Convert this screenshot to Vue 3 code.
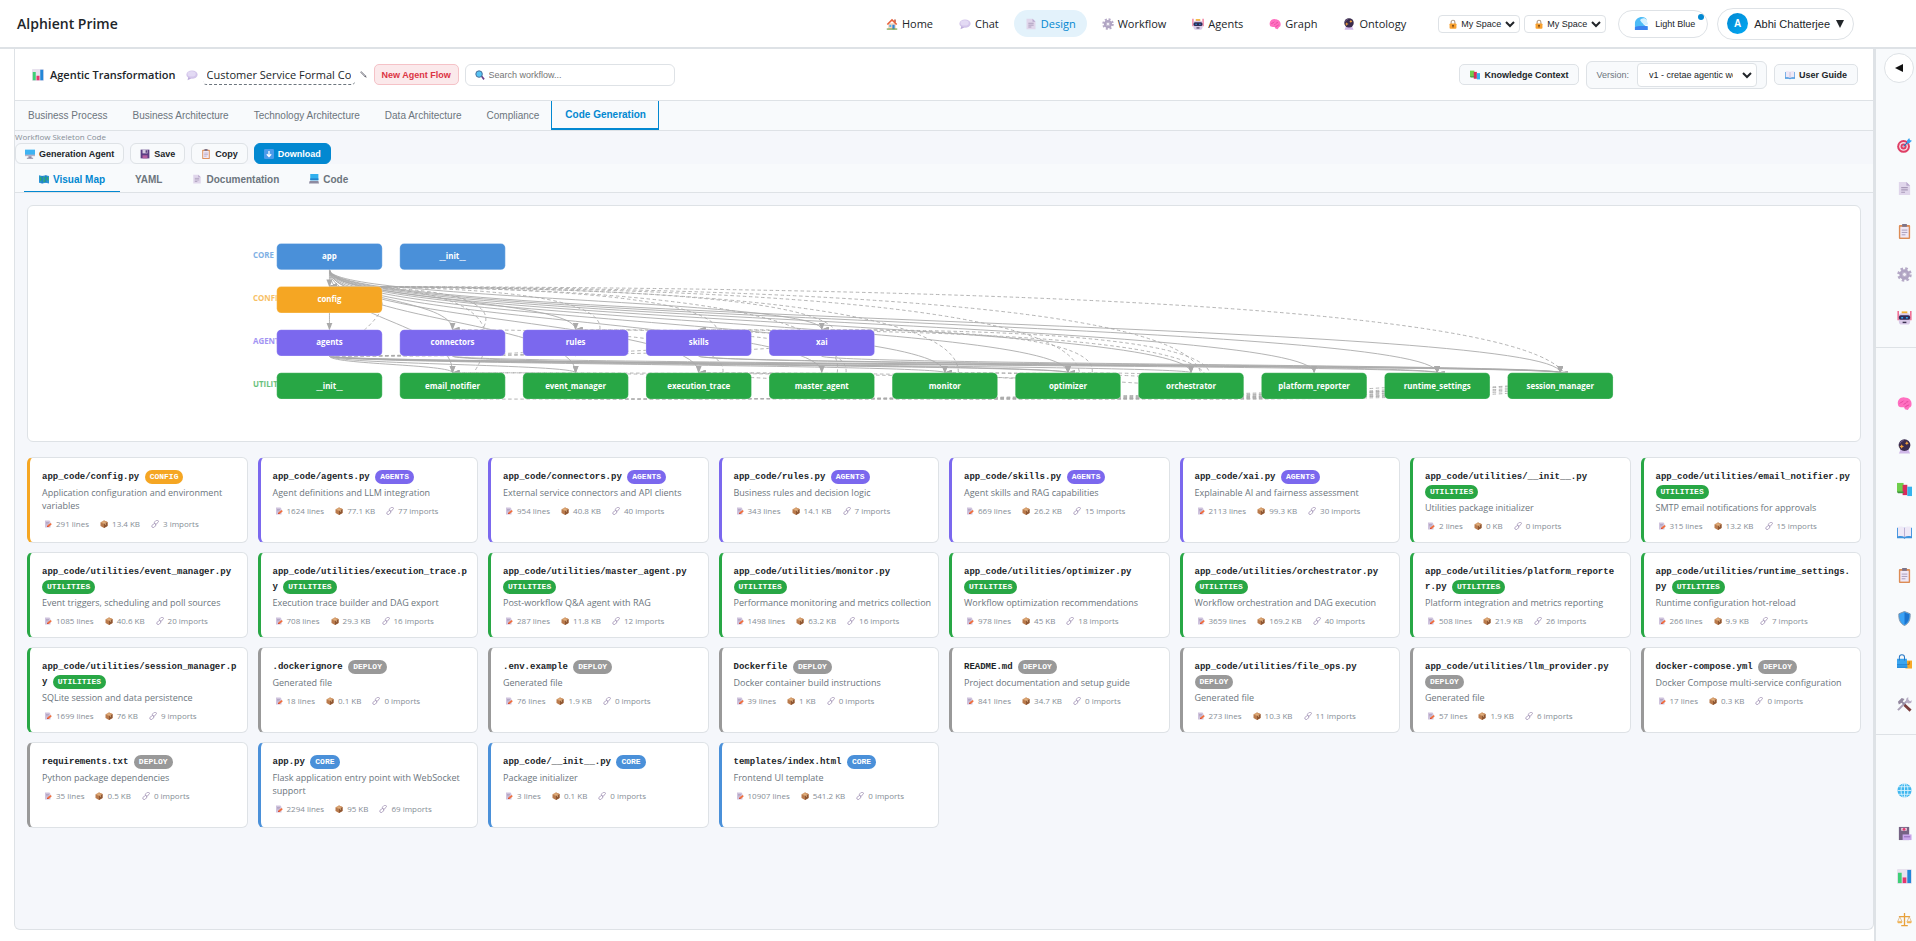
<template>
  <div class="app">
    <!-- shared icon shapes -->
    <svg class="sprite" aria-hidden="true">
      <symbol id="i-home" viewBox="0 0 16 16">
        <path d="M3 7h10v8H3z" fill="#f3d3bd" /><path d="M11 2h2v4h-2z" fill="#b5533c" />
        <path d="M1 8 8 1l7 7-1.500 1.200L8 4 2.500 9.200z" fill="#e8613c" />
        <path d="M8.500 9h3v6h-3z" fill="#2f86d6" /><path d="M4.500 9h2.500v3H4.500z" fill="#4fb4ef" /><path d="M1 14h14v1.500H1z" fill="#6b9e3f" />
      </symbol>
      <symbol id="i-chat" viewBox="0 0 16 16">
        <ellipse cx="8" cy="7.500" rx="7.500" ry="5.500" fill="#d3c5ea" /><path d="m3 11-1 4 5-2.500z" fill="#bfaedd" />
        <ellipse cx="7.500" cy="6.500" rx="5.500" ry="3.500" fill="#e3daf4" />
      </symbol>
      <symbol id="i-page" viewBox="0 0 16 16">
        <path d="M2 1h8l4 4v10H2z" fill="#e0d6eb" /><path d="m10 1 4 4h-4z" fill="#b9a9cd" />
        <path d="M4.500 7h7M4.500 9.500h7M4.500 12h4" stroke="#a899b8" stroke-width="1.200" />
      </symbol>
      <symbol id="i-gear" viewBox="0 0 16 16">
        <circle cx="8" cy="8" r="6.200" fill="none" stroke="#b5a9c6" stroke-width="3" stroke-dasharray="2.600 2.270" />
        <circle cx="8" cy="8" r="4" fill="none" stroke="#b0a4c3" stroke-width="3" /><circle cx="8" cy="8" r="2.200" fill="#f3eff8" stroke="#8f82a5" stroke-width=".6" />
      </symbol>
      <symbol id="i-robot" viewBox="0 0 16 16">
        <path d="M.5 1h1.500v10H.5zM14 1h1.500v10H14z" fill="#ef5c86" /><path d="M5 1.500h6V4H5z" fill="#f2b233" />
        <rect x="2" y="3.500" width="12" height="12" rx="3" fill="#d9c9e8" /><rect x="2" y="5.500" width="12" height="5" rx="2" fill="#312a55" />
        <path d="M4.500 7.500h2v1.500h-2zM9.500 7.500h2v1.500h-2z" fill="#2aa9f5" /><path d="M6 12.500h4V14H6z" fill="#3c3251" />
      </symbol>
      <symbol id="i-brain" viewBox="0 0 16 16">
        <path d="M1 9C0 4 4 1 8 1.500 13 1.500 16 5 15.500 9c0 2-1 3-2 3l-2 3-3-1-1-2C4 12 1.500 12 1 9z" fill="#ff6fc0" />
        <path d="M3 8c1-2 3-1 4-3M7 9c2 0 2-3 5-3M9 12c0-2 3-1 4-3" stroke="#e0459b" fill="none" />
      </symbol>
      <symbol id="i-orb" viewBox="0 0 16 16">
        <path d="M4 11h8l2 4.500H2z" fill="#d0b8e8" /><circle cx="8" cy="6.500" r="6.300" fill="#3a2c4d" /><path d="M3 5a5 5 0 0 1 4-3.500" stroke="#75628c" fill="none" />
        <path d="m5 5.500.8 1.700 1.700.8-1.700.8L5 10.500l-.8-1.700L2.500 8l1.700-.8zM10.500 2.500l.7 1.300 1.300.7-1.300.7-.7 1.300-.7-1.300-1.300-.7 1.300-.7z" fill="#f5a23c" />
      </symbol>
      <symbol id="i-lock" viewBox="0 0 16 16">
        <path d="M5 8V5a3 3 0 0 1 6 0v3" fill="none" stroke="#b09a85" stroke-width="1.800" /><rect x="2.500" y="7" width="11" height="8.500" rx="1.500" fill="#f9a12f" />
        <circle cx="8" cy="10.500" r="1.300" fill="#5b3413" /><path d="M7.400 11h1.200v2.500H7.400z" fill="#5b3413" />
      </symbol>
      <symbol id="i-wave" viewBox="0 0 16 16">
        <path d="M1 15V8C1 3.500 4.500 1 8.500 1c3 0 5 1.500 5.500 3.500-2-1-4-.5-4.500 2 0 2.500 2 4.500 5 4.500V15z" fill="#4dbcf7" />
        <path d="M1 12c4-2 9-1 13.500-1V15H1z" fill="#3b82f0" /><path d="M6.500 4.500C8 2 12 1.500 14 4.500c-.5 2.500 1 2 1 4-1.500 2-4 1.500-5.500-.5-1.500-1-2-2.500-3-3.500z" fill="#d6f1ff" />
      </symbol>
      <symbol id="i-chart" viewBox="0 0 16 16">
        <rect width="16" height="16" rx="1" fill="#e8e2ee" /><path d="M1 4h4v11H1z" fill="#3ecf76" /><path d="M6 9h4v6H6z" fill="#e5366f" /><path d="M11 1h4v14h-4z" fill="#2387d8" />
      </symbol>
      <symbol id="i-pencil" viewBox="0 0 16 16">
        <path d="m1 3 2-2 10 10-2 2z" fill="#b9b9bf" stroke="#9a9aa2" stroke-width="2" /><path d="m10 13 3-3 2.500 5.500z" fill="#6a6a70" />
      </symbol>
      <symbol id="i-search" viewBox="0 0 16 16">
        <path d="m9 10 2-1.500 4.500 5.500-2 1.800z" fill="#6a3c86" /><circle cx="6.500" cy="6.500" r="5.200" fill="#57c3f3" stroke="#4a6f98" stroke-width="1.600" />
      </symbol>
      <symbol id="i-books" viewBox="0 0 16 16">
        <path d="M0 1h7v10H0z" fill="#6fce4b" /><path d="M6 3h5v11H6z" fill="#d92b5c" /><path d="M11 5h5v10h-5z" fill="#34b3ee" /><path d="M0 10h7v2H1z" fill="#3f9440" />
      </symbol>
      <symbol id="i-book" viewBox="0 0 16 16">
        <path d="M0 3h16v11H9l-1 1-1-1H0z" fill="#3f93dd" /><path d="M1 2c3-1 5-.5 7 1 2-1.500 4-2 7-1v10c-3-.5-5-.5-7 .8-2-1.300-4-1.300-7-.8z" fill="#efe9f7" /><path d="M8 3v10" stroke="#b7abd0" />
      </symbol>
      <symbol id="i-target" viewBox="0 0 16 16">
        <circle cx="7" cy="9" r="6.800" fill="#df3e64" /><circle cx="7" cy="9" r="4.700" fill="#f4dfe8" /><circle cx="7" cy="9" r="3.200" fill="#df3e64" /><circle cx="7" cy="9" r="1.200" fill="#f4dfe8" />
        <path d="m7 9 5-5" stroke="#2679bd" stroke-width="1.300" /><path d="m10.500 3 2.500-3 .8 2.200L16 3l-3 2.600-2 .2z" fill="#38a5f0" />
      </symbol>
      <symbol id="i-clip" viewBox="0 0 16 16">
        <rect x="2" y="1" width="12" height="15" rx="1" fill="#dd8c55" /><path d="M3.500 3h9v11.500h-9z" fill="#efe8f6" /><path d="M5.500 0h5v3h-5z" fill="#7d7489" />
        <path d="M5 6.500h6M5 9h6M5 11.500h4" stroke="#a899b8" />
      </symbol>
      <symbol id="i-shield" viewBox="0 0 16 16">
        <path d="M8 .5 14 3c.3 6-1 10-6 12.500C3 13 1.700 9 2 3z" fill="#3aa2f5" stroke="#7d91a8" stroke-width="1" /><path d="m8 1.500 5 2c.2 5-.8 8.500-5 11z" fill="#1b74cf" />
      </symbol>
      <symbol id="i-bags" viewBox="0 0 16 16">
        <path d="M9 7h7v8.500H9z" fill="#f7a928" /><path d="M13 8v3h-2" fill="none" stroke="#ad6510" /><path d="M0 5h10.500l.5 10H0z" fill="#3aa5ef" />
        <path d="M2.500 7V3.500a2.700 2.700 0 0 1 5.500 0V7" fill="none" stroke="#2877c4" stroke-width="1.100" /><path d="M0 11.500h11M0 14h11" stroke="#1f7fd0" />
      </symbol>
      <symbol id="i-tools" viewBox="0 0 16 16">
        <path d="M1 14 12 3" stroke="#aba1b8" stroke-width="2.200" /><path d="M10 1.500 12 0v3l2 1.500 2-1-1 3-3 .5-2.500-2z" fill="#b7adc4" />
        <path d="m1 5 4-4 3 1-3 4-3 2z" fill="#93889f" /><path d="m5 5 4 4" stroke="#93889f" stroke-width="2" /><path d="m8 8.500 6.500 6" stroke="#7a3d3d" stroke-width="3" />
      </symbol>
      <symbol id="i-globe" viewBox="0 0 16 16">
        <circle cx="8" cy="8" r="7.500" fill="#40b7ef" /><path d="M.5 8h15M2 4h12M2 12h12M8 .5v15" stroke="#dff5ff" stroke-width=".9" /><ellipse cx="8" cy="8" rx="3.700" ry="7.500" fill="none" stroke="#dff5ff" stroke-width=".9" />
      </symbol>
      <symbol id="i-printer" viewBox="0 0 16 16">
        <path d="M2 1h11v14H2z" fill="#756384" /><path d="M6 9h9.500v6H6z" fill="#c9a6ea" /><path d="M7.500 11.500h6.500" stroke="#8f68b8" /><path d="M4.500 2h6v3h-6z" fill="#f0d5e2" /><circle cx="7.500" cy="3.500" r="1.500" fill="#e23a72" />
      </symbol>
      <symbol id="i-scales" viewBox="0 0 16 16">
        <path d="M8 1v13M4.500 14.500h7M2 5h12" stroke="#e8a13a" stroke-width="1.400" /><path d="M3 5 .8 10h4.400zM13 5l-2.200 5h4.400z" fill="none" stroke="#dcae72" stroke-width=".8" /><path d="M0 10h6l-1 2H1zM10 10h6l-1 2h-4z" fill="#f1b350" />
      </symbol>
      <symbol id="i-memo" viewBox="0 0 16 16">
        <path d="M2 1h9l2 3v11H2z" fill="#cfc3dd" /><path d="M4 5h6M4 7.500h5" stroke="#9b8dae" /><path d="m6 14 1-3.500L13.500 6 15.500 8.500 9.500 14z" fill="#f0703f" /><path d="m6 14 .8-2.500L9 14z" fill="#c7383f" />
      </symbol>
      <symbol id="i-package" viewBox="0 0 16 16">
        <path d="m1 5 7-4 7 3v8l-7 4-7-4z" fill="#b97a4c" /><path d="m8 8 7-4v8l-7 4z" fill="#8f5733" /><path d="m1 5 7-4 7 3-7 4z" fill="#d59c6a" /><path d="m4 3 7 3.500V10" stroke="#efcf9e" fill="none" />
      </symbol>
      <symbol id="i-link" viewBox="0 0 16 16">
        <rect x="7" y="1.500" width="9" height="5.500" rx="2.700" transform="rotate(-45 11 5)" fill="none" stroke="#a596b8" stroke-width="1.700" />
        <rect x="1" y="8.500" width="9" height="5.500" rx="2.700" transform="rotate(-45 5.500 11)" fill="none" stroke="#a596b8" stroke-width="1.700" />
      </symbol>
      <symbol id="i-map" viewBox="0 0 16 16">
        <path d="m0 2 5 1 6-1 5 1v12l-5-1-6 1-5-1z" fill="#2a93d8" /><path d="m1 4 3 1 1 4-3 3zM7 4l3 1-1 4 2 3-4 1zM12 4l3 1v6l-3-2z" fill="#2fa874" /><path d="M5 3v12M11 2v12" stroke="#156aa8" />
      </symbol>
      <symbol id="i-pc" viewBox="0 0 16 16">
        <path d="M0 1h16v10H0z" fill="#3fb3f2" /><path d="M0 9h16v2.500H0z" fill="#b8b0c4" /><path d="M5.500 11.500h5V14h-5zM3 14h10v1.500H3z" fill="#8f87a0" />
      </symbol>
      <symbol id="i-laptop" viewBox="0 0 16 16">
        <path d="M2 0h13v10H2z" fill="#31b0ee" /><path d="M2 7h13v3H2z" fill="#2383cb" /><path d="M1 11h14l1 4H0z" fill="#8d8aa0" />
      </symbol>
      <symbol id="i-floppy" viewBox="0 0 16 16">
        <path d="M1 1h14v14H1z" fill="#5c3f84" /><path d="M4 1h8v6H4z" fill="#d6cce2" /><path d="M4 10h8v5H4z" fill="#b45fa0" /><path d="M9 2h2v4H9z" fill="#4b3170" />
      </symbol>
      <symbol id="i-down" viewBox="0 0 16 16">
        <rect width="16" height="16" rx="2" fill="#4b9bea" /><path d="M8 3v9M4.500 8.500 8 12l3.500-3.500" fill="none" stroke="#fff" stroke-width="2" />
      </symbol>
      <symbol id="i-chevron" viewBox="0 0 10 8">
        <path d="m1 2 4 4 4-4" fill="none" stroke="#212529" stroke-width="2" />
      </symbol>
    </svg>

    <header class="topbar">
      <h1 class="brand">Alphient Prime</h1>
      <nav class="main-nav">
        <a
          v-for="item in navItems"
          :key="item.label"
          href="#"
          class="nav-item"
          :class="{ active: item.label === 'Design' }"
        >
          <svg class="icon"><use :href="`#i-${item.icon}`" /></svg>
          {{ item.label }}
        </a>
      </nav>
      <div class="spaces">
        <label v-for="n in 2" :key="n" class="space-box">
          <svg class="icon small"><use href="#i-lock" /></svg>
          <select :aria-label="`Space ${n}`">
            <option>My Space</option>
          </select>
          <svg class="chevron"><use href="#i-chevron" /></svg>
        </label>
      </div>
      <button type="button" class="theme-btn">
        <svg class="icon wave"><use href="#i-wave" /></svg>
        Light Blue
        <span class="dot"></span>
      </button>
      <button type="button" class="user-btn">
        <span class="avatar">A</span>
        Abhi Chatterjee
        <svg class="caret" viewBox="0 0 8 8"><path d="M0 0h8L4 8z" fill="#212529" /></svg>
      </button>
    </header>

    <div class="body">
      <main class="workspace">
        <div class="title-row">
          <svg class="icon"><use href="#i-chart" /></svg>
          <h2 class="title">Agentic Transformation</h2>
          <svg class="icon"><use href="#i-chat" /></svg>
          <input v-model="workflowName" class="name-input" type="text" aria-label="Workflow name" />
          <svg class="icon pencil"><use href="#i-pencil" /></svg>
          <button type="button" class="new-btn">New Agent Flow</button>
          <label class="search">
            <svg class="icon small"><use href="#i-search" /></svg>
            <input type="search" placeholder="Search workflow..." aria-label="Search workflow" />
          </label>
          <div class="title-actions">
            <button type="button" class="soft-btn">
              <svg class="icon small"><use href="#i-books" /></svg>Knowledge Context
            </button>
            <div class="version">
              <label for="version">Version:</label>
              <span class="version-box">
                <select id="version">
                  <option>v1 - cretae agentic workflow</option>
                </select>
                <svg class="chevron"><use href="#i-chevron" /></svg>
              </span>
            </div>
            <button type="button" class="soft-btn">
              <svg class="icon small"><use href="#i-book" /></svg>User Guide
            </button>
          </div>
        </div>

        <div class="tabs" role="tablist">
          <button
            v-for="tab in tabs"
            :key="tab"
            type="button"
            role="tab"
            class="tab"
            :class="{ active: activeTab === tab }"
            :aria-selected="activeTab === tab"
            @click="activeTab = tab"
          >
            {{ tab }}
          </button>
        </div>

        <div class="toolbar">
          <p class="toolbar-label">Workflow Skeleton Code</p>
          <div class="toolbar-buttons">
            <button
              v-for="btn in toolbarButtons"
              :key="btn.label"
              type="button"
              class="tool-btn"
              :class="{ primary: btn.primary }"
            >
              <svg class="icon small"><use :href="`#i-${btn.icon}`" /></svg>{{ btn.label }}
            </button>
          </div>
        </div>

        <div class="sub-tabs" role="tablist">
          <button
            v-for="view in views"
            :key="view.label"
            type="button"
            role="tab"
            class="sub-tab"
            :class="{ active: activeView === view.label }"
            :aria-selected="activeView === view.label"
            @click="activeView = view.label"
          >
            <svg v-if="view.icon" class="icon small"><use :href="`#i-${view.icon}`" /></svg>{{ view.label }}
          </button>
        </div>

        <div class="content">
          <section class="map-panel">
            <svg class="map" viewBox="0 0 1600 240">
              <defs>
                <marker id="arrow" viewBox="0 0 10 10" refX="9" refY="5" markerWidth="9" markerHeight="7" markerUnits="userSpaceOnUse" preserveAspectRatio="none" orient="auto">
                  <path d="M0 0 10 5 0 10z" fill="#aaa" />
                </marker>
              </defs>
              <text
                v-for="(layer, row) in layers"
                :key="layer.name"
                x="14"
                :y="nodeTop(row) + 16"
                class="layer-label"
                :fill="colors[layer.name]"
              >{{ layer.name.toUpperCase() }}</text>
              <path
                v-for="(edge, i) in edges"
                :key="i"
                :d="edge.d"
                class="edge"
                :class="{ dashed: edge.dashed }"
                marker-end="url(#arrow)"
              />
              <template v-for="(layer, row) in layers" :key="layer.name">
                <g v-for="(node, col) in layer.nodes" :key="node">
                  <rect
                    :x="nodeCenter(col) - 60"
                    :y="nodeTop(row)"
                    width="120"
                    height="30"
                    rx="5"
                    :fill="colors[layer.name]"
                    stroke="#fff"
                    stroke-opacity=".3"
                  />
                  <text :x="nodeCenter(col)" :y="nodeTop(row) + 18" class="node-label">{{ node }}</text>
                </g>
              </template>
            </svg>
          </section>

          <section class="file-grid">
            <article
              v-for="file in files"
              :key="file.name"
              class="file-card"
              :style="{ borderLeftColor: colors[file.layer] }"
            >
              <h3 class="file-name">
                {{ file.name }}
                <span class="badge" :style="{ backgroundColor: colors[file.layer] }">{{ file.layer.toUpperCase() }}</span>
              </h3>
              <p class="file-desc">{{ file.desc }}</p>
              <div class="file-meta">
                <span><svg class="icon tiny"><use href="#i-memo" /></svg>{{ file.lines }} lines</span>
                <span><svg class="icon tiny"><use href="#i-package" /></svg>{{ file.size }} KB</span>
                <span><svg class="icon tiny"><use href="#i-link" /></svg>{{ file.imports }} imports</span>
              </div>
            </article>
          </section>
        </div>
      </main>

      <aside class="sidebar">
        <button type="button" class="collapse-btn" aria-label="Expand panel">
          <svg viewBox="0 0 8 8"><path d="M8 0v8L0 4z" fill="#111" /></svg>
        </button>
        <div v-for="(group, g) in sideGroups" :key="g" class="side-group">
          <button v-for="icon in group" :key="icon" type="button" class="side-btn" :aria-label="icon">
            <svg class="icon"><use :href="`#i-${icon}`" /></svg>
          </button>
        </div>
      </aside>
    </div>
  </div>
</template>

<script setup>
import { ref } from 'vue'

const navItems = [
  { icon: 'home', label: 'Home' },
  { icon: 'chat', label: 'Chat' },
  { icon: 'page', label: 'Design' },
  { icon: 'gear', label: 'Workflow' },
  { icon: 'robot', label: 'Agents' },
  { icon: 'brain', label: 'Graph' },
  { icon: 'orb', label: 'Ontology' },
]

const tabs = [
  'Business Process',
  'Business Architecture',
  'Technology Architecture',
  'Data Architecture',
  'Compliance',
  'Code Generation',
]

const toolbarButtons = [
  { icon: 'pc', label: 'Generation Agent' },
  { icon: 'floppy', label: 'Save' },
  { icon: 'clip', label: 'Copy' },
  { icon: 'down', label: 'Download', primary: true },
]

const views = [
  { icon: 'map', label: 'Visual Map' },
  { icon: '', label: 'YAML' },
  { icon: 'page', label: 'Documentation' },
  { icon: 'laptop', label: 'Code' },
]

const sideGroups = [
  ['target', 'page', 'clip', 'gear', 'robot'],
  ['brain', 'orb', 'books', 'book', 'clip', 'shield', 'bags', 'tools'],
  ['globe', 'printer', 'chart', 'scales'],
]

const workflowName = ref('Customer Service Formal Contract')
const activeTab = ref('Code Generation')
const activeView = ref('Visual Map')

const colors = {
  core: '#4a90d9',
  config: '#f5a623',
  agents: '#7b68ee',
  utilities: '#28a745',
  deploy: '#999999',
}

const layers = [
  { name: 'core', nodes: ['app', '__init__'] },
  { name: 'config', nodes: ['config'] },
  { name: 'agents', nodes: ['agents', 'connectors', 'rules', 'skills', 'xai'] },
  {
    name: 'utilities',
    nodes: [
      '__init__', 'email_notifier', 'event_manager', 'execution_trace', 'master_agent', 'monitor',
      'optimizer', 'orchestrator', 'platform_reporter', 'runtime_settings', 'session_manager',
    ],
  },
]

// [from row, from column, to row, to columns]
const links = [
  [0, 0, 1, [0]],
  [0, 0, 2, [1, 2, 4]],
  [0, 0, 3, [1, 2, 3, 4, 5, 6, 7, 8, 9, 10]],
  [1, 0, 2, [0]],
  [2, 0, 3, [1, 2, 5, 6, 7, 9, 10]],
  [2, 1, 3, [6, 10]],
  [2, 3, 3, [9, 10]],
  [2, 4, 3, [10]],
  [2, 0, 1, [0]],
  [2, 1, 1, [0]],
  [2, 2, 1, [0]],
  [2, 3, 1, [0]],
  [2, 4, 1, [0]],
  [2, 0, 2, [1, 2, 3, 4]],
  [2, 4, 2, [3, 2]],
  [3, 1, 1, [0]],
  [3, 3, 2, [1]],
  [3, 4, 1, [0]],
  [3, 4, 2, [2]],
  [3, 5, 1, [0]],
  [3, 6, 1, [0]],
  [3, 6, 2, [4]],
  [3, 7, 1, [0]],
  [3, 7, 2, [3, 4]],
  [3, 10, 1, [0]],
  [3, 4, 3, [1, 3]],
  [3, 6, 3, [3, 5]],
  [3, 7, 3, [1, 5, 6]],
  [3, 1, 3, [10]],
  [3, 2, 3, [9, 10]],
  [3, 4, 3, [9, 10]],
  [3, 5, 3, [9, 10]],
  [3, 6, 3, [9, 10]],
  [3, 7, 3, [9, 10]],
]

const nodeCenter = (col) => 101 + col * 140
const nodeTop = (row) => 29 + row * 49

function edgePath(fromRow, fromCol, toRow, toCol) {
  const x1 = nodeCenter(fromCol)
  const y1 = nodeTop(fromRow) + 30
  const x2 = nodeCenter(toCol)
  const y2 = nodeTop(toRow)
  if (toRow > fromRow) {
    const mid = (y1 + y2) / 2
    return `M${x1} ${y1} C${x1} ${mid} ${x2} ${mid} ${x2} ${y2}`
  }
  if (toRow === fromRow && toCol > fromCol) {
    return `M${x1} ${y1} Q${x2 + 120} ${y1} ${x2} ${y2}`
  }
  return `M${x1} ${y1} Q${x1 + 120} ${y2} ${x2} ${y2}`
}

const edges = links.flatMap(([fromRow, fromCol, toRow, cols]) =>
  cols.map((col) => ({
    d: edgePath(fromRow, fromCol, toRow, col),
    dashed: toRow <= fromRow,
  })),
)

const rows = [
  ['app_code/config.py', 'config', 'Application configuration and environment variables', 291, 13.4, 3],
  ['app_code/agents.py', 'agents', 'Agent definitions and LLM integration', 1624, 77.1, 77],
  ['app_code/connectors.py', 'agents', 'External service connectors and API clients', 954, 40.8, 40],
  ['app_code/rules.py', 'agents', 'Business rules and decision logic', 343, 14.1, 7],
  ['app_code/skills.py', 'agents', 'Agent skills and RAG capabilities', 669, 26.2, 15],
  ['app_code/xai.py', 'agents', 'Explainable AI and fairness assessment', 2113, 99.3, 30],
  ['app_code/utilities/__init__.py', 'utilities', 'Utilities package initializer', 2, 0, 0],
  ['app_code/utilities/email_notifier.py', 'utilities', 'SMTP email notifications for approvals', 315, 13.2, 15],
  ['app_code/utilities/event_manager.py', 'utilities', 'Event triggers, scheduling and poll sources', 1085, 40.6, 20],
  ['app_code/utilities/execution_trace.py', 'utilities', 'Execution trace builder and DAG export', 708, 29.3, 16],
  ['app_code/utilities/master_agent.py', 'utilities', 'Post-workflow Q&A agent with RAG', 287, 11.8, 12],
  ['app_code/utilities/monitor.py', 'utilities', 'Performance monitoring and metrics collection', 1498, 63.2, 16],
  ['app_code/utilities/optimizer.py', 'utilities', 'Workflow optimization recommendations', 978, 45, 18],
  ['app_code/utilities/orchestrator.py', 'utilities', 'Workflow orchestration and DAG execution', 3659, 169.2, 40],
  ['app_code/utilities/platform_reporter.py', 'utilities', 'Platform integration and metrics reporting', 508, 21.9, 26],
  ['app_code/utilities/runtime_settings.py', 'utilities', 'Runtime configuration hot-reload', 266, 9.9, 7],
  ['app_code/utilities/session_manager.py', 'utilities', 'SQLite session and data persistence', 1699, 76, 9],
  ['.dockerignore', 'deploy', 'Generated file', 18, 0.1, 0],
  ['.env.example', 'deploy', 'Generated file', 76, 1.9, 0],
  ['Dockerfile', 'deploy', 'Docker container build instructions', 39, 1, 0],
  ['README.md', 'deploy', 'Project documentation and setup guide', 841, 34.7, 0],
  ['app_code/utilities/file_ops.py', 'deploy', 'Generated file', 273, 10.3, 11],
  ['app_code/utilities/llm_provider.py', 'deploy', 'Generated file', 57, 1.9, 6],
  ['docker-compose.yml', 'deploy', 'Docker Compose multi-service configuration', 17, 0.3, 0],
  ['requirements.txt', 'deploy', 'Python package dependencies', 35, 0.5, 0],
  ['app.py', 'core', 'Flask application entry point with WebSocket support', 2294, 95, 69],
  ['app_code/__init__.py', 'core', 'Package initializer', 3, 0.1, 0],
  ['templates/index.html', 'core', 'Frontend UI template', 10907, 541.2, 0],
]

const files = rows.map(([name, layer, desc, lines, size, imports]) => ({
  name, layer, desc, lines, size, imports,
}))
</script>

<style>
body {
  margin: 0;
  background: #fff;
}
</style>

<style scoped>
.app {
  height: 100vh;
  display: flex;
  flex-direction: column;
  overflow: hidden;
  font-family: "Open Sans", "Noto Sans", sans-serif;
  font-size: 11px;
  color: #212529;
}

.app *,
.app *::before {
  box-sizing: border-box;
}

.sprite {
  position: absolute;
  width: 0;
  height: 0;
}

button,
select,
input {
  margin: 0;
  font-family: "Liberation Sans", Arial, sans-serif;
  font-size: 10px;
  color: inherit;
}

button {
  cursor: pointer;
}

.icon {
  width: 12px;
  height: 12px;
  flex-shrink: 0;
}

.icon.small {
  width: 10px;
  height: 10px;
}

.icon.tiny {
  width: 8px;
  height: 8px;
}

.icon.wave {
  width: 15px;
  height: 15px;
  margin-right: 6px;
}

.chevron {
  width: 10px;
  height: 8px;
  flex-shrink: 0;
}

/* top bar */
.topbar {
  height: 49px;
  flex-shrink: 0;
  display: flex;
  align-items: center;
  padding: 0 62px 0 17px;
  border-bottom: 2px solid #dee2e6;
  background: #fff;
}

.brand {
  margin: 0 auto 0 0;
  font-size: 14px;
  font-weight: 600;
}

.main-nav {
  display: flex;
  gap: 4px;
  margin-right: 21px;
}

.nav-item {
  display: flex;
  align-items: center;
  gap: 4px;
  height: 27px;
  padding: 0 11px;
  border-radius: 14px;
  color: #212529;
  font-weight: 500;
  text-decoration: none;
}

.nav-item.active {
  background: #e3f2fb;
  color: #0288d1;
}

.spaces {
  display: flex;
  gap: 4px;
  margin-right: 12px;
}

.space-box {
  display: flex;
  align-items: center;
  height: 18px;
  width: 82px;
  padding: 0 4px 0 9px;
  border: 1px solid #dee2e6;
  border-radius: 4px;
}

.space-box select,
.version-box select {
  flex: 1;
  min-width: 0;
  padding: 0 0 0 3px;
  border: 0;
  background: transparent;
  appearance: none;
  outline: none;
}

.space-box select {
  font-size: 9px;
}

.theme-btn,
.user-btn {
  display: flex;
  align-items: center;
  border: 1px solid #dee2e6;
  background: #fff;
  border-radius: 16px;
}

.theme-btn {
  position: relative;
  height: 28px;
  padding: 0 12px 0 15px;
  margin-right: 9px;
  font-size: 9px;
}

.dot {
  position: absolute;
  top: 3px;
  right: 3px;
  width: 6px;
  height: 6px;
  border-radius: 50%;
  background: #0288d1;
}

.user-btn {
  height: 32px;
  padding: 0 9px;
  gap: 6px;
  font-size: 11px;
}

.avatar {
  display: flex;
  align-items: center;
  justify-content: center;
  width: 21px;
  height: 21px;
  border-radius: 50%;
  background: linear-gradient(135deg, #0288d1, #03a9f4);
  color: #fff;
  font-size: 10px;
  font-weight: 700;
}

.caret {
  width: 8px;
  height: 8px;
}

/* workspace */
.body {
  flex: 1;
  min-height: 0;
  display: flex;
}

.workspace {
  flex: 1;
  min-width: 0;
  display: flex;
  flex-direction: column;
  margin: 0 0 11px 14px;
  border: 1px solid #dee2e6;
  border-top: 0;
  border-radius: 0 0 6px 6px;
  background: #f5f7fb;
}

.title-row {
  display: flex;
  align-items: center;
  height: 52px;
  flex-shrink: 0;
  padding: 0 15px 0 17px;
  border-bottom: 1px solid #dee2e6;
  background: #fff;
}

.title {
  margin: 0 10px 0 6px;
  font-size: 11px;
  font-weight: 600;
  white-space: nowrap;
}

.name-input {
  width: 152px;
  height: 21px;
  margin-left: 5px;
  padding: 0 4px;
  border: 0;
  border-bottom: 1px dashed #6c757d;
  border-radius: 4px;
  background: transparent;
  font-family: "Open Sans", "Noto Sans", sans-serif;
  font-size: 11px;
  outline: none;
}

.icon.pencil {
  width: 7px;
  height: 7px;
  margin: 0 7px 0 5px;
}

.new-btn {
  height: 21px;
  width: 85px;
  padding: 0;
  margin-right: 6px;
  border: 1px solid #f5c2c7;
  border-radius: 5px;
  background: #fbe9eb;
  color: #dc3545;
  font-size: 9px;
  font-weight: 700;
  white-space: nowrap;
}

.search {
  display: flex;
  align-items: center;
  gap: 4px;
  width: 210px;
  height: 22px;
  padding: 0 9px;
  border: 1px solid #dee2e6;
  border-radius: 6px;
}

.search input {
  flex: 1;
  min-width: 0;
  padding: 0;
  border: 0;
  outline: none;
  background: transparent;
  font-size: 9px;
}

.search input::placeholder {
  color: #757575;
}

.title-actions {
  display: flex;
  align-items: center;
  gap: 7px;
  margin-left: auto;
}

.soft-btn {
  display: flex;
  align-items: center;
  gap: 4px;
  height: 21px;
  padding: 0 10px;
  border: 1px solid #dee2e6;
  border-radius: 5px;
  background: #f8fafc;
  font-size: 9px;
  font-weight: 700;
  white-space: nowrap;
}

.version {
  display: flex;
  align-items: center;
  gap: 8px;
  height: 28px;
  padding: 0 9px;
  border: 1px solid #dee2e6;
  border-radius: 6px;
  background: #f8fafc;
  color: #6c757d;
  font-family: "Liberation Sans", Arial, sans-serif;
  font-size: 9px;
}

.version-box {
  display: flex;
  align-items: center;
  width: 120px;
  height: 24px;
  padding: 0 4px 0 8px;
  border: 1px solid #dee2e6;
  border-radius: 4px;
  background: #fff;
  color: #212529;
}

.version-box select {
  margin-right: 9px;
  font-size: 9px;
}

.tabs {
  display: flex;
  height: 30px;
  flex-shrink: 0;
  border-bottom: 1px solid #dee2e6;
  background: #f8fafc;
}

.tab {
  padding: 0 12px 0 13px;
  border: 0;
  background: transparent;
  color: #6c757d;
}

.tab.active {
  border: 1px solid #0288d1;
  border-top: 0;
  border-bottom-width: 2px;
  color: #0288d1;
  font-weight: 700;
}

.toolbar {
  flex-shrink: 0;
}

.toolbar-label {
  margin: 0;
  font-size: 8px;
  line-height: 12px;
  color: #868e96;
}

.toolbar-buttons {
  display: flex;
  gap: 6px;
}

.tool-btn {
  display: flex;
  align-items: center;
  gap: 4px;
  height: 21px;
  padding: 0 9px;
  border: 1px solid #dee2e6;
  border-radius: 6px;
  background: #f8fafc;
  font-size: 9px;
  font-weight: 700;
}

.tool-btn.primary {
  border-color: #0288d1;
  background: #0288d1;
  color: #fff;
}

.sub-tabs {
  display: flex;
  height: 29px;
  flex-shrink: 0;
  padding-left: 9px;
  border-bottom: 1px solid #dee2e6;
  background: #f8fafc;
}

.sub-tab {
  display: flex;
  align-items: center;
  gap: 4px;
  padding: 3px 15px 0;
  border: 0;
  border-bottom: 1px solid transparent;
  background: transparent;
  color: #6c757d;
  font-weight: 700;
}

.sub-tab.active {
  border-bottom-color: #0288d1;
  color: #0288d1;
}

.content {
  flex: 1;
  min-height: 0;
  padding: 12px;
}

.map-panel {
  padding: 12px;
  margin-bottom: 15px;
  border: 1px solid #dee2e6;
  border-radius: 6px;
  background: #fff;
}

.map {
  display: block;
  width: 100%;
  height: 211px;
}

.layer-label {
  font-size: 9px;
  font-weight: 700;
  opacity: 0.7;
}

.node-label {
  fill: #fff;
  font-size: 9px;
  font-weight: 700;
  text-anchor: middle;
}

.edge {
  fill: none;
  stroke: #aaa;
  stroke-width: 1;
}

.edge.dashed {
  stroke-dasharray: 4 3;
}

/* file cards */
.file-grid {
  display: grid;
  grid-template-columns: repeat(auto-fill, minmax(210px, 1fr));
  grid-auto-rows: minmax(86px, auto);
  gap: 9px 10px;
}

.file-card {
  padding: 12px 6px 8px 12px;
  border: 1px solid #dee2e6;
  border-left-width: 3px;
  border-radius: 6px;
  background: #fff;
}

.file-name {
  margin: 0 0 1px;
  font-family: "Liberation Mono", monospace;
  font-size: 9px;
  font-weight: 700;
  line-height: 15px;
  word-break: break-all;
}

.badge {
  display: inline-block;
  height: 14px;
  padding: 0 5px;
  border-radius: 7px;
  color: #fff;
  font-size: 8px;
  line-height: 14px;
  vertical-align: middle;
}

.file-desc {
  margin: 0 0 6px;
  font-size: 9px;
  line-height: 13px;
  color: #6c757d;
}

.file-meta {
  display: flex;
  gap: 11px;
  padding-left: 2px;
  font-size: 8px;
  line-height: 11px;
  color: #868e96;
}

.file-meta span {
  display: flex;
  align-items: center;
  gap: 4px;
}

/* right rail */
.sidebar {
  width: 42px;
  flex-shrink: 0;
  border-left: 2px solid #dee2e6;
  background: #f8fafc;
  overflow: hidden;
}

.collapse-btn {
  display: flex;
  align-items: center;
  justify-content: center;
  width: 30px;
  height: 30px;
  margin: 4px 0 7px 8px;
  padding: 0;
  border: 1px solid #dee2e6;
  border-radius: 50%;
  background: #fff;
}

.collapse-btn svg {
  width: 8px;
  height: 8px;
}

.side-group {
  padding: 34px 0 8px;
  border-bottom: 1px solid #dee2e6;
}

.side-btn {
  display: flex;
  align-items: center;
  width: 100%;
  height: 43px;
  padding: 0 0 0 21px;
  border: 0;
  background: transparent;
}

.side-btn .icon {
  width: 15px;
  height: 15px;
}
</style>
